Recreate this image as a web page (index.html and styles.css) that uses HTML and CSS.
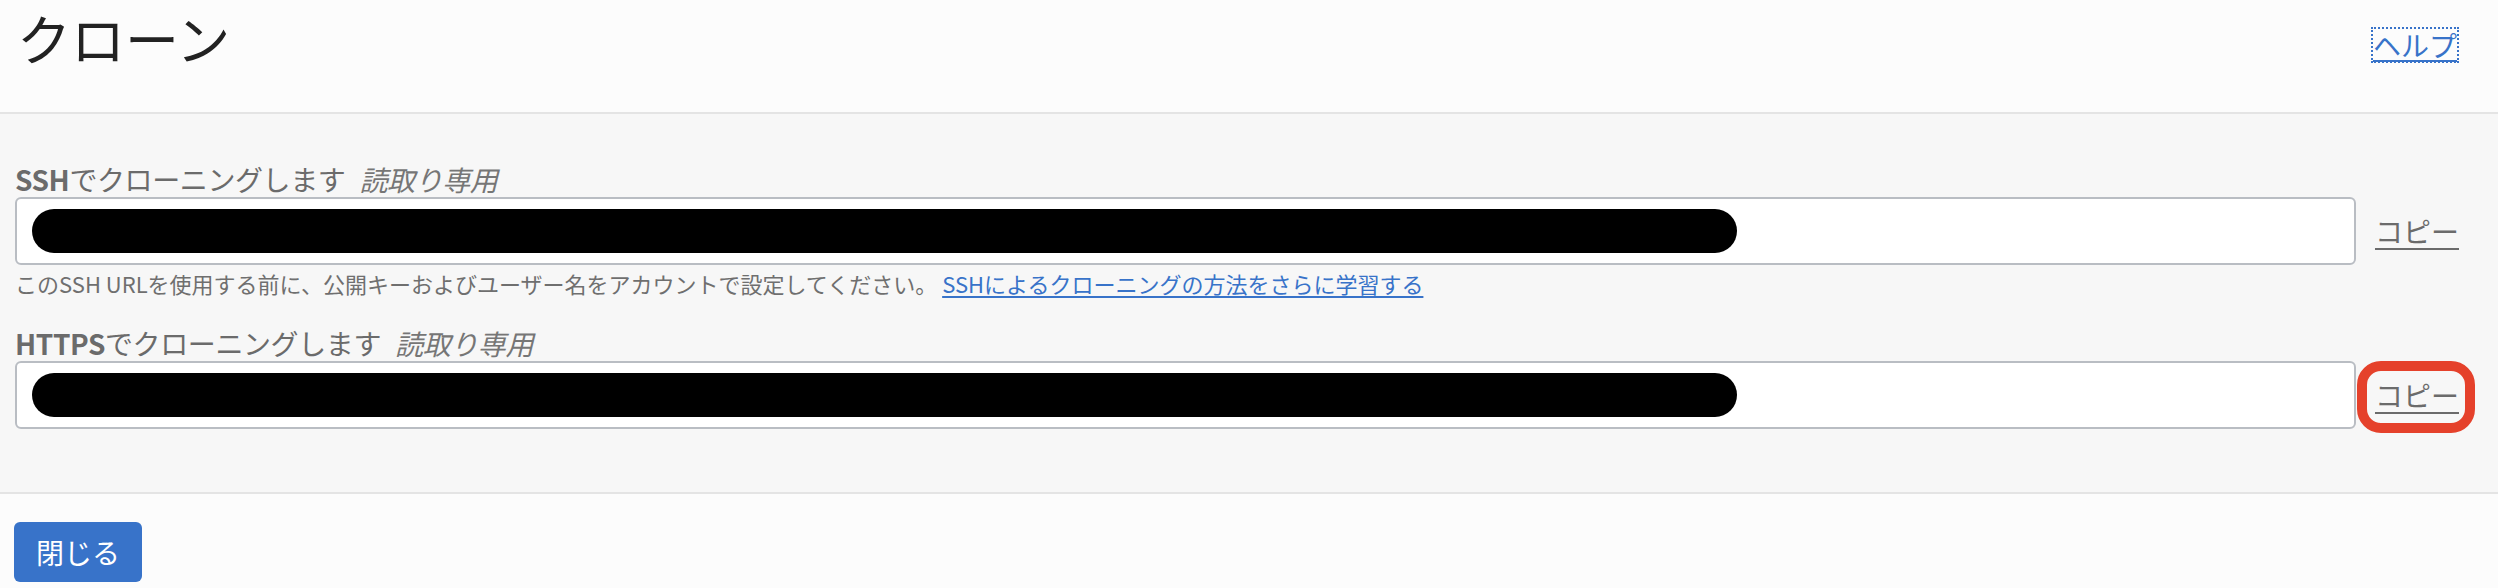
FILE: index.html
```html
<!DOCTYPE html>
<html lang="ja">
<head>
<meta charset="utf-8">
<title>クローン</title>
<link rel="stylesheet" href="styles.css">
</head>
<body>
<div class="panel">
  <header class="panel-header">
    <h1 class="panel-title">クローン</h1>
    <a class="help-link" href="#">ヘルプ</a>
  </header>
  <main class="panel-body">
    <div class="field">
      <div class="field-label"><span class="proto">SSH</span>でクローニングします<span class="readonly">読取り専用</span></div>
      <div class="field-row">
        <div class="url-box"><span class="redacted"></span></div>
        <span class="copy-cell"><a class="copy-link" href="#">コピー</a></span>
      </div>
      <p class="field-help">このSSH URLを使用する前に、公開キーおよびユーザー名をアカウントで設定してください。 <a class="learn-link" href="#">SSHによるクローニングの方法をさらに学習する</a></p>
    </div>
    <div class="field field-second">
      <div class="field-label"><span class="proto">HTTPS</span>でクローニングします<span class="readonly">読取り専用</span></div>
      <div class="field-row">
        <div class="url-box"><span class="redacted"></span></div>
        <span class="copy-cell"><a class="copy-link" href="#">コピー</a><span class="highlight-ring"></span></span>
      </div>
    </div>
  </main>
  <footer class="panel-footer">
    <button class="btn-primary" type="button">閉じる</button>
  </footer>
</div>
</body>
</html>
```

FILE: styles.css
```css
html, body {
  margin: 0;
  padding: 0;
}

body {
  font-family: "Noto Sans CJK JP", "Noto Sans", "Liberation Sans", sans-serif;
  background: #fcfcfc;
  color: #222;
}

.panel {
  width: 2498px;
  height: 588px;
  display: flex;
  flex-direction: column;
}

.panel-header {
  box-sizing: border-box;
  height: 114px;
  padding: 6px 41px 0 17px;
  background: #fcfcfc;
  border-bottom: 2px solid #e4e4e4;
  display: flex;
  justify-content: space-between;
  align-items: flex-start;
}

.panel-title {
  margin: 0;
  font-size: 54px;
  line-height: 64px;
  font-weight: 400;
  color: #222;
}

.help-link {
  display: inline-block;
  margin-top: 23px;
  font-size: 28px;
  line-height: 32px;
  color: #3873c9;
  text-decoration: underline;
  text-underline-offset: 3px;
  outline: 2px dotted #3873c9;
}

.panel-body {
  box-sizing: border-box;
  height: 380px;
  padding: 47px 39px 0 15px;
  background: #f7f7f7;
  border-bottom: 2px solid #e4e4e4;
}

.field-label {
  font-size: 28px;
  line-height: 36px;
  color: #6b6b6b;
  white-space: nowrap;
  letter-spacing: -0.4px;
}

.proto {
  font-weight: 700;
}

.readonly {
  margin-left: 14px;
  font-style: italic;
  color: #767676;
}

.field-row {
  display: flex;
  align-items: stretch;
}

.url-box {
  flex: 1;
  box-sizing: border-box;
  height: 68px;
  padding: 0 15px;
  background: #fff;
  border: 2px solid #b9bdc3;
  border-radius: 6px;
  display: flex;
  align-items: center;
}

.redacted {
  display: block;
  width: 1705px;
  height: 44px;
  border-radius: 22px;
  background: #000;
}

.copy-cell {
  position: relative;
  margin-left: 19px;
  display: flex;
  align-items: center;
}

.copy-link {
  font-size: 28px;
  line-height: 36px;
  color: #6b6b6b;
  text-decoration: underline;
  text-underline-offset: 5px;
  text-decoration-thickness: 2px;
}

.highlight-ring {
  position: absolute;
  top: 0;
  bottom: -4px;
  left: -18px;
  right: -16px;
  border: 10px solid #e5412b;
  border-radius: 24px;
}

.field-help {
  margin: 3px 0 0;
  font-size: 22px;
  line-height: 30px;
  color: #6f6f6f;
  white-space: nowrap;
}

.learn-link {
  color: #3873c9;
  text-decoration: underline;
  text-underline-offset: 3px;
}

.field-second {
  margin-top: 27px;
}

.panel-footer {
  flex: 1;
  padding: 28px 0 0 14px;
  background: #fcfcfc;
}

.btn-primary {
  box-sizing: border-box;
  height: 60px;
  padding: 0 22px;
  border: none;
  border-radius: 6px;
  background: #3873c9;
  color: #fff;
  font-family: "Noto Sans CJK JP", "Noto Sans", sans-serif;
  font-size: 28px;
  line-height: 60px;
}
```
